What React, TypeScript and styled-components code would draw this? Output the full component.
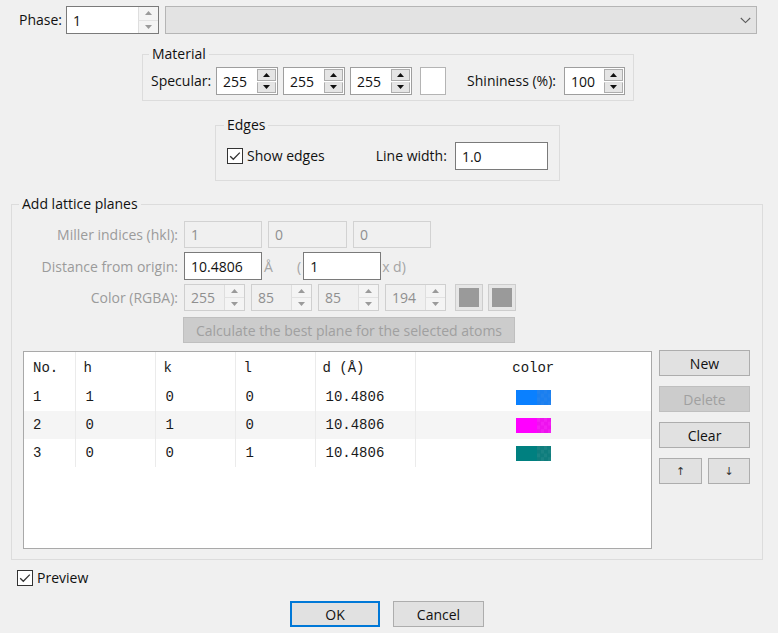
import React from 'react';
import styled, { createGlobalStyle, css } from 'styled-components';

const GlobalStyle = createGlobalStyle`
  html, body { margin: 0; padding: 0; background: #f0f0f0; }
  body {
    font-family: "Open Sans", "Noto Sans", sans-serif;
    font-size: 14px;
    color: #111;
  }
  * { box-sizing: border-box; }
`;

const Dialog = styled.div`
  width: 778px;
  height: 633px;
  display: flex;
  flex-direction: column;
  padding-top: 6px;
  overflow: hidden;
`;

const Row = styled.div<{ $ml?: number; $mt?: number; $h?: number }>`
  display: flex;
  align-items: center;
  margin-left: ${(p) => p.$ml ?? 0}px;
  margin-top: ${(p) => p.$mt ?? 0}px;
  height: ${(p) => (p.$h ? `${p.$h}px` : 'auto')};
`;

const Label = styled.span<{ $disabled?: boolean; $ml?: number; $mr?: number }>`
  white-space: nowrap;
  color: ${(p) => (p.$disabled ? '#9b9b9b' : '#111')};
  margin-left: ${(p) => p.$ml ?? 0}px;
  margin-right: ${(p) => p.$mr ?? 0}px;
  line-height: 20px;
`;

/* ---------- Spin box ---------- */
type SpinVariant = 'flat' | 'raised' | 'disabled';

const SpinBox = styled.div<{ $w: number; $h: number; $v: SpinVariant; $ml?: number }>`
  display: flex;
  width: ${(p) => p.$w}px;
  height: ${(p) => p.$h}px;
  margin-left: ${(p) => p.$ml ?? 0}px;
  flex: none;
  border: 1px solid ${(p) => (p.$v === 'disabled' ? '#cfcfcf' : p.$v === 'raised' ? '#9e9e9e' : '#7a7a7a')};
  background: ${(p) => (p.$v === 'disabled' ? '#f0f0f0' : '#fff')};
`;

const SpinField = styled.span<{ $v: SpinVariant }>`
  flex: 1;
  display: flex;
  align-items: center;
  padding-left: 6px;
  color: ${(p) => (p.$v === 'disabled' ? '#8f8f8f' : '#111')};
`;

const SpinButtons = styled.div<{ $v: SpinVariant }>`
  width: 20px;
  display: flex;
  flex-direction: column;
  gap: ${(p) => (p.$v === 'raised' ? '1px' : '0')};
  padding: ${(p) => (p.$v === 'raised' ? '1px 1px 1px 0' : '0')};
  background: ${(p) => (p.$v === 'raised' ? '#fff' : '#f0f0f0')};
`;

const SpinBtn = styled.div<{ $v: SpinVariant }>`
  flex: 1;
  display: flex;
  align-items: center;
  justify-content: center;
  ${(p) =>
    p.$v === 'raised'
      ? css`
          background: #e5e5e5;
          border: 1px solid #adadad;
        `
      : css`
          background: #f4f4f4;
          border-left: 1px solid #dedede;
          & + & { border-top: 1px solid #e2e2e2; }
        `}
`;

const Tri = ({ up, color }: { up?: boolean; color: string }) => (
  <svg width="7" height="4" viewBox="0 0 7 4">
    {up ? <polygon points="0,4 7,4 3.5,0" fill={color} /> : <polygon points="0,0 7,0 3.5,4" fill={color} />}
  </svg>
);

const Spin = ({ value, w, h, v, ml }: { value: string; w: number; h: number; v: SpinVariant; ml?: number }) => {
  const arrow = v === 'raised' ? '#111' : '#9a9a9a';
  return (
    <SpinBox $w={w} $h={h} $v={v} $ml={ml}>
      <SpinField $v={v}>{value}</SpinField>
      <SpinButtons $v={v}>
        <SpinBtn $v={v}>
          <Tri up color={arrow} />
        </SpinBtn>
        <SpinBtn $v={v}>
          <Tri color={arrow} />
        </SpinBtn>
      </SpinButtons>
    </SpinBox>
  );
};

/* ---------- Inputs ---------- */
const TextBox = styled.div<{ $w: number; $h: number; $disabled?: boolean; $ml?: number }>`
  flex: none;
  display: flex;
  align-items: center;
  width: ${(p) => p.$w}px;
  height: ${(p) => p.$h}px;
  margin-left: ${(p) => p.$ml ?? 0}px;
  padding-left: 6px;
  border: 1px solid ${(p) => (p.$disabled ? '#d2d2d2' : '#7a7a7a')};
  background: ${(p) => (p.$disabled ? '#f0f0f0' : '#fff')};
  color: ${(p) => (p.$disabled ? '#8f8f8f' : '#111')};
`;

const Combo = styled.div`
  flex: none;
  width: 592px;
  height: 28px;
  margin-left: 6px;
  border: 1px solid #b5b5b5;
  background: #e3e3e3;
  display: flex;
  align-items: center;
  justify-content: flex-end;
  padding-right: 5px;
`;

const ColorWell = styled.div<{ $disabled?: boolean; $ml?: number }>`
  flex: none;
  width: ${(p) => (p.$disabled ? 28 : 26)}px;
  height: ${(p) => (p.$disabled ? 27 : 28)}px;
  margin-left: ${(p) => p.$ml ?? 0}px;
  border: 1px solid ${(p) => (p.$disabled ? '#cdcdcd' : '#b4b4b4')};
  padding: ${(p) => (p.$disabled ? '3px' : '2px')};
  background: ${(p) => (p.$disabled ? '#e6e6e6' : '#fff')};
`;

const WellFill = styled.div<{ $c: string }>`
  width: 100%;
  height: 100%;
  background: ${(p) => p.$c};
`;

/* ---------- Groups ---------- */
const Group = styled.div<{ $ml: number; $w: number; $mt: number }>`
  position: relative;
  flex: none;
  margin-left: ${(p) => p.$ml}px;
  margin-top: ${(p) => p.$mt}px;
  width: ${(p) => p.$w}px;
  border: 1px solid #dcdcdc;
`;

const GroupTitle = styled.span<{ $left: number }>`
  position: absolute;
  top: -11px;
  left: ${(p) => p.$left}px;
  padding: 0 3px;
  line-height: 20px;
  background: #f0f0f0;
  color: #111;
  white-space: nowrap;
`;

const GroupBody = styled.div<{ $pt: number; $pb: number; $pl: number }>`
  padding: ${(p) => p.$pt}px 0 ${(p) => p.$pb}px ${(p) => p.$pl}px;
`;

/* ---------- Checkbox ---------- */
const CheckWrap = styled.label<{ $ml?: number }>`
  display: flex;
  align-items: center;
  gap: 4px;
  margin-left: ${(p) => p.$ml ?? 0}px;
  line-height: 20px;
`;

const CheckIcon = () => (
  <svg width="16" height="16" viewBox="0 0 16 16">
    <rect x="0.5" y="0.5" width="15" height="15" fill="#fff" stroke="#333" />
    <path d="M3.2 8.2 L6.3 11.3 L12.8 4.6" fill="none" stroke="#333" strokeWidth="1.3" />
  </svg>
);

/* ---------- Buttons ---------- */
const Button = styled.div<{ $w: number; $disabled?: boolean; $default?: boolean; $ml?: number }>`
  flex: none;
  width: ${(p) => p.$w}px;
  height: 26px;
  margin-left: ${(p) => p.$ml ?? 0}px;
  display: flex;
  align-items: center;
  justify-content: center;
  white-space: nowrap;
  background: ${(p) => (p.$disabled ? '#cccccc' : '#e1e1e1')};
  border: ${(p) => (p.$default ? '2px solid #0078d7' : `1px solid ${p.$disabled ? '#bfbfbf' : '#adadad'}`)};
  color: ${(p) => (p.$disabled ? '#a0a0a0' : '#111')};
`;

const ArrowText = styled.span`
  font-family: "DejaVu Sans", sans-serif;
  font-size: 11px;
  color: #333;
`;

/* ---------- Lattice form ---------- */
const FormGrid = styled.div`
  display: grid;
  grid-template-columns: 166px auto;
  column-gap: 6px;
  row-gap: 4px;
  align-items: center;
`;

const FormLabel = styled.span`
  text-align: right;
  color: #9b9b9b;
  white-space: nowrap;
`;

const FormCell = styled.div<{ $h: number; $gap?: number }>`
  display: flex;
  align-items: center;
  height: ${(p) => p.$h}px;
  gap: ${(p) => p.$gap ?? 0}px;
`;

const Unit = styled.span<{ $ml: number; $w?: number }>`
  margin-left: ${(p) => p.$ml}px;
  color: #a5a5a5;
  width: ${(p) => (p.$w ? `${p.$w}px` : 'auto')};
`;

const CalcRow = styled.div`
  display: flex;
  margin: 6px 0 0 171px;
`;

/* ---------- Table ---------- */
const TableArea = styled.div`
  display: flex;
  gap: 7px;
  margin-top: 8px;
  padding-left: 11px;
  align-items: flex-start;
`;

const TableBox = styled.div`
  width: 629px;
  height: 198px;
  background: #fff;
  border: 1px solid #a9a9a9;
  font-family: "Liberation Mono", "Courier New", monospace;
  font-size: 14px;
  color: #1a1a1a;
`;

const Table = styled.table`
  border-collapse: collapse;
  width: 627px;
  table-layout: fixed;
`;

const Tr = styled.tr<{ $alt?: boolean; $head?: boolean }>`
  height: ${(p) => (p.$head ? 31 : 28)}px;
  background: ${(p) => (p.$alt ? '#f5f5f5' : 'transparent')};
`;

const Td = styled.td<{ $w?: number; $sep?: boolean; $pl?: number; $center?: boolean }>`
  width: ${(p) => (p.$w ? `${p.$w}px` : 'auto')};
  padding: 0 0 0 ${(p) => p.$pl ?? 9}px;
  border-left: ${(p) => (p.$sep ? '1px solid #ebebeb' : 'none')};
  text-align: ${(p) => (p.$center ? 'center' : 'left')};
  white-space: pre;
  vertical-align: middle;
`;

const Swatch = styled.div<{ $c: string; $c2: string; $c3: string }>`
  display: inline-flex;
  width: 35px;
  height: 15px;
  vertical-align: middle;
  background: ${(p) => p.$c};
  &::after {
    content: '';
    margin-left: 21px;
    width: 14px;
    height: 15px;
    background: conic-gradient(${(p) => p.$c2} 25%, ${(p) => p.$c3} 0 50%, ${(p) => p.$c2} 0 75%, ${(p) => p.$c3} 0);
    background-size: 7px 7.5px;
  }
`;

const SideButtons = styled.div`
  display: flex;
  flex-direction: column;
  gap: 10px;
  margin-top: -1px;
`;

const ArrowRow = styled.div`
  display: flex;
  gap: 6px;
`;

const Footer = styled.div`
  display: flex;
  margin: 15px 0 0 290px;
  gap: 13px;
`;

const rows = [
  { n: '1', h: '1', k: '0', l: '0', d: '10.4806', c: ['#0a80ff', '#1a7ff0', '#2282ee'] },
  { n: '2', h: '0', k: '1', l: '0', d: '10.4806', c: ['#ff00ff', '#ee12ee', '#f21ef2'] },
  { n: '3', h: '0', k: '0', l: '1', d: '10.4806', c: ['#008080', '#0f7d7d', '#1a8383'] },
];

export default function App() {
  return (
    <>
      <GlobalStyle />
      <Dialog>
        <Row $ml={19} $h={28}>
          <Label $mr={4}>Phase:</Label>
          <Spin value="1" w={93} h={28} v="flat" />
          <Combo>
            <svg width="11" height="7" viewBox="0 0 11 7">
              <path d="M0.8 1 L5.5 5.6 L10.2 1" fill="none" stroke="#5a5a5a" strokeWidth="1.1" />
            </svg>
          </Combo>
        </Row>

        <Group $ml={142} $mt={20} $w={492}>
          <GroupTitle $left={6}>Material</GroupTitle>
          <GroupBody $pt={12} $pb={5} $pl={8}>
            <Row $h={28}>
              <Label $mr={5}>Specular:</Label>
              <Spin value="255" w={62} h={28} v="raised" />
              <Spin value="255" w={62} h={28} v="raised" ml={5} />
              <Spin value="255" w={62} h={28} v="raised" ml={5} />
              <ColorWell $ml={8} />
              <Label $ml={21} $mr={8}>Shininess (%):</Label>
              <Spin value="100" w={61} h={28} v="raised" />
            </Row>
          </GroupBody>
        </Group>

        <Group $ml={215} $mt={24} $w={345}>
          <GroupTitle $left={8}>Edges</GroupTitle>
          <GroupBody $pt={16} $pb={10} $pl={11}>
            <Row $h={28}>
              <CheckWrap>
                <CheckIcon />
                <span>Show edges</span>
              </CheckWrap>
              <Label $ml={51} $mr={8}>Line width:</Label>
              <TextBox $w={93} $h={28}>1.0</TextBox>
            </Row>
          </GroupBody>
        </Group>

        <Group $ml={11} $mt={23} $w={752}>
          <GroupTitle $left={7}>Add lattice planes</GroupTitle>
          <GroupBody $pt={16} $pb={10} $pl={0}>
            <FormGrid>
              <FormLabel>Miller indices (hkl):</FormLabel>
              <FormCell $h={27} $gap={6}>
                <TextBox $w={78} $h={27} $disabled>1</TextBox>
                <TextBox $w={79} $h={27} $disabled>0</TextBox>
                <TextBox $w={78} $h={27} $disabled>0</TextBox>
              </FormCell>

              <FormLabel>Distance from origin:</FormLabel>
              <FormCell $h={28}>
                <TextBox $w={78} $h={28}>10.4806</TextBox>
                <Unit $ml={2} $w={12}>Å</Unit>
                <Unit $ml={21}>(</Unit>
                <TextBox $w={78} $h={28} $ml={2}>1</TextBox>
                <Unit $ml={1}>x d)</Unit>
              </FormCell>

              <FormLabel>Color (RGBA):</FormLabel>
              <FormCell $h={27} $gap={6}>
                <Spin value="255" w={61} h={27} v="disabled" />
                <Spin value="85" w={61} h={27} v="disabled" />
                <Spin value="85" w={61} h={27} v="disabled" />
                <Spin value="194" w={61} h={27} v="disabled" />
                <ColorWell $disabled $ml={3}>
                  <WellFill $c="#9a9a9a" />
                </ColorWell>
                <ColorWell $disabled $ml={-1}>
                  <WellFill $c="#9a9a9a" />
                </ColorWell>
              </FormCell>
            </FormGrid>

            <CalcRow>
              <Button $w={332} $disabled>
                Calculate the best plane for the selected atoms
              </Button>
            </CalcRow>

            <TableArea>
              <TableBox>
                <Table>
                  <tbody>
                    <Tr $head>
                      <Td $w={51}>No.</Td>
                      <Td $w={80} $sep $pl={8}>h</Td>
                      <Td $w={80} $sep $pl={8}>k</Td>
                      <Td $w={80} $sep $pl={8}>l</Td>
                      <Td $w={100} $sep $pl={7}>d (Å)</Td>
                      <Td $sep $center $pl={0}>color</Td>
                    </Tr>
                    {rows.map((r, i) => (
                      <Tr key={r.n} $alt={i === 1}>
                        <Td>{r.n}</Td>
                        <Td $sep $pl={10}>{r.h}</Td>
                        <Td $sep $pl={10}>{r.k}</Td>
                        <Td $sep $pl={10}>{r.l}</Td>
                        <Td $sep $pl={10}>{r.d}</Td>
                        <Td $sep $center $pl={0}>
                          <Swatch $c={r.c[0]} $c2={r.c[1]} $c3={r.c[2]} />
                        </Td>
                      </Tr>
                    ))}
                  </tbody>
                </Table>
              </TableBox>
              <SideButtons>
                <Button $w={91}>New</Button>
                <Button $w={91} $disabled>Delete</Button>
                <Button $w={91}>Clear</Button>
                <ArrowRow>
                  <Button $w={43}><ArrowText>↑</ArrowText></Button>
                  <Button $w={42}><ArrowText>↓</ArrowText></Button>
                </ArrowRow>
              </SideButtons>
            </TableArea>
          </GroupBody>
        </Group>

        <Row $ml={17} $mt={10} $h={16}>
          <CheckWrap>
            <CheckIcon />
            <span>Preview</span>
          </CheckWrap>
        </Row>

        <Footer>
          <Button $w={90} $default>OK</Button>
          <Button $w={91}>Cancel</Button>
        </Footer>
      </Dialog>
    </>
  );
}
